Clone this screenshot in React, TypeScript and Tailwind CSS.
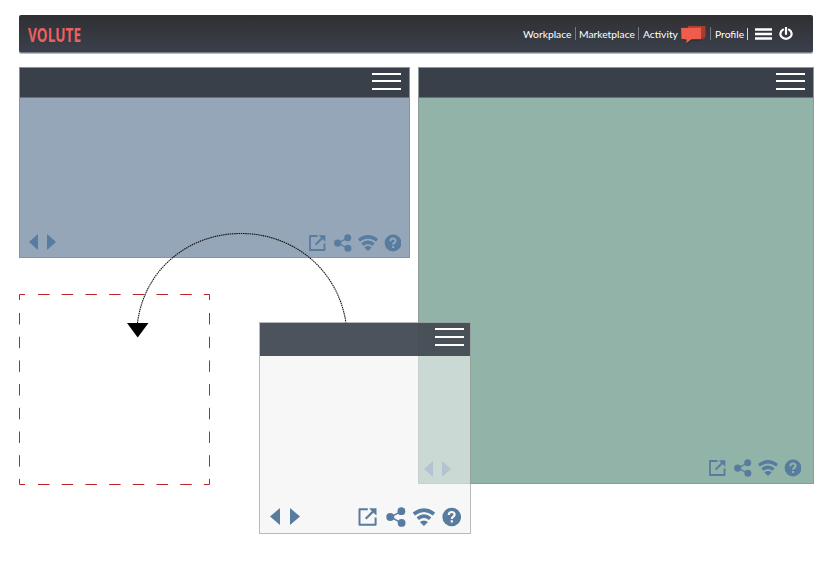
import React from "react";

function MenuBars({ className = "" }: { className?: string }) {
  return (
    <div className={`flex h-[17px] w-[29px] flex-col ${className}`}>
      <span className="h-[2px] bg-white" />
      <span className="mt-[5px] h-[2px] bg-white" />
      <span className="mt-[6px] h-[2px] bg-white" />
    </div>
  );
}

function Arrows({ className, color }: { className: string; color: string }) {
  return (
    <svg viewBox="0 0 27 16" className={className} fill={color} preserveAspectRatio="none">
      <path d="M9 0V16L0 8ZM18 0V16L27 8Z" />
    </svg>
  );
}

function Tools({ size, color, mark }: { size: string; color: string; mark: string }) {
  return (
    <svg viewBox="0 0 92 18" className={size} fill={color} stroke={color}>
      <path d="M8.5 2H1V16H15.5V9.5" fill="none" strokeWidth="1.8" strokeLinejoin="round" />
      <path d="M6.6 10.6L13 4.2" fill="none" strokeWidth="2" />
      <path d="M9.8 1.2H16.3V7.7L14 5.6L11.8 3.5Z" stroke="none" />
      <path d="M38.5 4L29 9L38.5 14.3" fill="none" strokeWidth="1.3" />
      <circle cx="38.7" cy="3.8" r="3.5" stroke="none" />
      <circle cx="28.7" cy="9.1" r="3.6" stroke="none" />
      <circle cx="38.9" cy="14.3" r="3.5" stroke="none" />
      <path d="M49.9 6.3Q59 -.8 68.1 6.3M53.4 10.5Q59 6 64.6 10.5" fill="none" strokeWidth="3.3" />
      <path d="M55.3 13.4Q59 10.7 62.7 13.4L59 17Z" stroke="none" />
      <circle cx="84" cy="9" r="8.4" stroke="none" />
      <path d="M81.3 7.2C81.5 3.5 86.9 3.8 86.6 7C86.3 8.7 84.1 8.6 84.1 10.7M84.1 12V14" fill="none" stroke={mark} strokeWidth="2" />
    </svg>
  );
}

function ChatIcon() {
  return (
    <svg viewBox="0 0 28 20" className="h-5 w-7">
      <path d="M8 .8L25.5 1V12.5L23 12.5L24 14.5L20 13H8Z" fill="#a93b30" />
      <path d="M2 4L21 3V15.5H11.5L7 19.5V15.5L2 15Z" fill="#262a30" />
      <path d="M1 3L21 2.5V14.3H11.5L6.5 18.3V14.5L1.5 14Z" fill="#ee5d4c" />
    </svg>
  );
}

function NavItem({ children, width }: { children: string; width: string }) {
  return (
    <span className={`block whitespace-nowrap ${width}`}>
      <span className="inline-block origin-left scale-x-[1.03]">{children}</span>
    </span>
  );
}

function Divider() {
  return <span className="h-[13px] w-px bg-[#777b82]" />;
}

export default function App() {
  return (
    <div className="relative h-[583px] w-[829px] overflow-hidden bg-white pl-[19px] pt-[15px] font-['Lato',sans-serif]">
      <header className="flex h-[38px] w-[794px] items-center rounded-[2px] border-b border-[#747b83] bg-gradient-to-b from-[#303033] to-[#3a404b] shadow-[0_1px_0_#b9bdc0]">
        <div className="w-[504px] pl-[9px] pt-[5px]">
          <span className="inline-block origin-left scale-x-[0.715] font-['Open_Sans',sans-serif] text-[19px] font-bold leading-5 text-[#ed6062]">VOLUTE</span>
        </div>
        <nav className="flex items-center text-[10px] leading-[14px] text-white">
          <NavItem width="w-[52px]">Workplace</NavItem>
          <Divider />
          <span className="w-[3px]" />
          <NavItem width="w-[59px]">Marketplace</NavItem>
          <Divider />
          <span className="w-[4px]" />
          <NavItem width="w-[37px]">Activity</NavItem>
          <span className="pt-[3px]"><ChatIcon /></span>
          <span className="w-[2px]" />
          <Divider />
          <span className="w-[4px]" />
          <NavItem width="w-[32px]">Profile</NavItem>
          <span className="h-[12px] w-px bg-[#d5d6d8]" />
        </nav>
        <svg viewBox="0 0 17 12" className="ml-[7px] mt-px h-3 w-[17px]" fill="white">
          <path d="M0 .2H17V2.8H0ZM0 4.7H17V7.3H0ZM0 9.2H17V11.8H0Z" />
        </svg>
        <svg viewBox="0 0 14 14" className="ml-[7px] h-[14px] w-[14px]" fill="none" stroke="white" strokeWidth="2.2">
          <path d="M4 2.6A5.6 5 0 1 0 10 2.6M7 .8V7" strokeLinecap="round" />
        </svg>
      </header>

      <main className="mt-[14px] flex items-start gap-2">
        <section className="flex h-[191px] w-[391px] flex-col border border-[#8b9196] bg-[#94a6b7]">
          <div className="flex h-[30px] shrink-0 justify-end border-b border-[#667281] bg-[#3a404a] pr-[8px] pt-[5px]">
            <MenuBars />
          </div>
          <div className="mt-auto flex items-end justify-between pb-[5px] pl-[9px] pr-[8px]">
            <Arrows className="mb-[2px] h-4 w-[27px]" color="#587c9f" />
            <Tools size="h-[18px] w-[92px]" color="#587c9f" mark="#94a6b7" />
          </div>
        </section>
        <section className="flex h-[417px] w-[396px] flex-col border border-[#8e9b96] bg-[#92b4a8]">
          <div className="flex h-[30px] shrink-0 justify-end border-b border-[#66766f] bg-[#3a404a] pr-[8px] pt-[5px]">
            <MenuBars />
          </div>
          <div className="mt-auto flex items-end justify-between pb-[6px] pl-[5px] pr-[12px]">
            <Arrows className="mb-0 h-4 w-[27px]" color="#587ca0" />
            <Tools size="h-[18px] w-[92px]" color="#587ca0" mark="#92b4a8" />
          </div>
        </section>
      </main>

      <svg viewBox="0 0 192 192" className="absolute left-[19px] top-[294px] h-48 w-48" fill="none" stroke="#bd2429">
        <path d="M.5 6V.5H6M185 .5H190.5V6M190.5 185V190.5H185M6 190.5H.5V185" />
        <path d="M19 .5H185M19 190.5H185" strokeDasharray="11.5 12.2" />
        <path d="M.5 19V185M190.5 19V185" strokeDasharray="11.5 12.2" />
      </svg>

      <svg viewBox="0 0 829 583" className="pointer-events-none absolute left-0 top-0 h-[583px] w-[829px]">
        <path d="M137.5 323C144 270 188 233.5 241 233.5C294 233.5 338 270 346 323" fill="none" stroke="#111" strokeWidth="1.1" strokeDasharray="1.5 0.7" />
        <path d="M127 323H148.5L137.7 337.5Z" fill="black" />
      </svg>

      <section className="absolute left-[259px] top-[322px] flex h-[212px] w-[212px] flex-col border border-black/25 bg-[#f1f1f1]/60">
        <div className="flex h-[33px] shrink-0 justify-end bg-[#3a404a]/90 pr-[6px] pt-[5px]">
          <div className="flex h-[18px] w-[29px] flex-col justify-between">
            <span className="h-[2px] bg-white" />
            <span className="h-[2px] bg-white" />
            <span className="h-[2px] bg-white" />
          </div>
        </div>
        <div className="mt-auto flex items-end justify-between pb-[6px] pl-[10px] pr-[9px]">
          <Arrows className="mb-[2px] h-[17px] w-[30px]" color="#587c9f" />
          <Tools size="h-5 w-[103px]" color="#587c9f" mark="#f7f7f7" />
        </div>
      </section>
    </div>
  );
}
